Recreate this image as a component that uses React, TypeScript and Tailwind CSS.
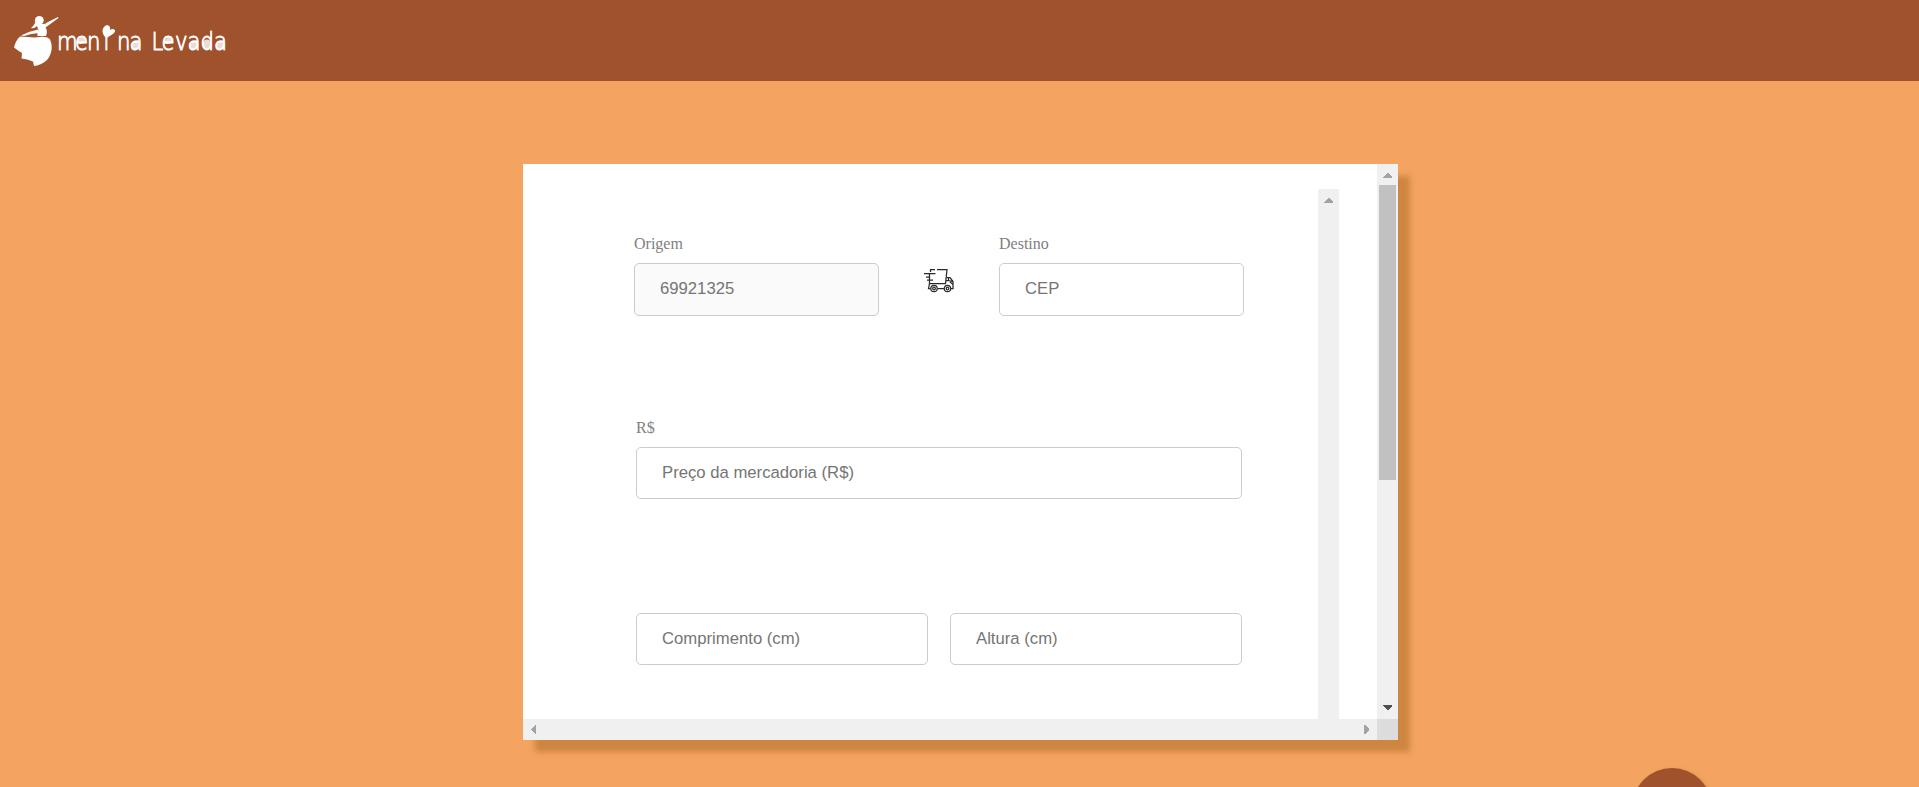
import type { ReactNode } from 'react';

type FieldProps = { label?: string; placeholder: string; className: string; disabled?: boolean };

function Field({ label, placeholder, className, disabled }: FieldProps) {
  return (
    <label className="flex min-w-0 flex-1 flex-col gap-[7px] font-['Liberation_Serif',serif] text-base leading-6 text-[#808080]">
      {label}
      <input
        placeholder={placeholder}
        disabled={disabled}
        className={`w-full rounded-[5px] border border-[#cccccc] bg-white px-[25px] font-['Liberation_Sans',sans-serif] text-[16.7px] placeholder:text-[#757575] disabled:bg-[#fafafa] ${className}`}
      />
    </label>
  );
}

function Logo() {
  return (
    <svg width="240" height="81" viewBox="0 0 240 81" fill="#fff">
      <path d="M20 36.500 C27 37 34 38 40 37 C44 36.500 48 37 50 39.500 C53 46 52 54 47 60 C43 64 38 65.500 34 66 L33 61.500 Q27 59 21.500 58.500 L22 53 Q17 50 14 47.500 C15 43 17 39 20 36.500Z" />
      <circle cx="39.300" cy="20.300" r="4.400" />
      <path d="M35.500 19 Q36 24 31 28 Q34 29 37 26 L38.500 30.500 Q37 34 37.500 36 L46 36 Q48 31 45.500 27.500 L58.500 18 L58 17 L47 22.500 Q45 24.500 42 24Z" />
      <path d="M38 29.500 Q30 31 21 35.500 L24 36 Q31 33.500 39 33Z" />
      <text
        transform="scale(.85 1)"
        x="67.1 88.2 102.4 121.8 137.6 152.4 168 178.2 190 205.9 220.6 235.9 251.8"
        y="50"
        fontSize="25"
        fontWeight="200"
        fontFamily="'DejaVu Sans', sans-serif"
        stroke="#fff"
        strokeWidth=".9"
        strokeLinejoin="round"
      >
        menina Levada
      </text>
      <path d="M106.500 38.500 C102 34 101.500 30 104 27 C107 23.500 111 26 110 30 C113 27.500 116 30 115 31.500 C113 35 109 35.500 106.500 38.500Z" />
      <g opacity=".8">
        <ellipse cx="82" cy="40.500" rx="4.500" ry="3" transform="rotate(-25 82 40.500)" />
        <ellipse cx="136" cy="45" rx="4.500" ry="4.500" />
        <ellipse cx="169" cy="40.500" rx="4.500" ry="3" transform="rotate(-25 169 40.500)" />
        <ellipse cx="194" cy="45" rx="4.500" ry="4.500" />
        <ellipse cx="207" cy="44.500" rx="4.500" ry="5" />
        <ellipse cx="220.500" cy="45" rx="4.500" ry="4.500" />
      </g>
    </svg>
  );
}

function Truck() {
  return (
    <svg width="30" height="24" viewBox="0 0 30 24" fill="none" stroke="#2b2b2b" strokeWidth="1.250">
      <path d="M6.500 3V.7H11M13 .7H23L21.500 14.500H5.500V5M0 4.500H11.500M2 8H5M3 11H9" />
      <path d="M5.500 14.500L4.500 19.500H6.500M13.500 19.500H20M27 19.500H29V12.500L26 8.500H22.500M24.500 8.500V11.500L28.500 12.500M22 11.500H24.500M28.500 15L26 13" />
      <circle cx="10" cy="19.500" r="3.200" /><circle cx="10" cy="19.500" r="1.300" />
      <circle cx="23.500" cy="19.500" r="3.200" /><circle cx="23.500" cy="19.500" r="1.300" />
    </svg>
  );
}

function Arrow({ d, color = '#a3a3a3' }: { d: string; color?: string }): ReactNode {
  return (
    <svg width="21" height="21" viewBox="0 0 21 21" className="shrink-0" shapeRendering="crispEdges">
      <path d={d} fill={color} />
    </svg>
  );
}

export default function App() {
  return (
    <div className="relative flex h-screen flex-col overflow-hidden bg-[#f4a460]">
      <header className="h-[81px] shrink-0 bg-[#a0522d]">
        <Logo />
      </header>
      <main className="flex justify-center pt-[83px] pl-0.5">
        <section className="flex h-[576px] w-[875px] shrink-0 flex-col bg-white shadow-[12px_12px_6px_#cd853f]">
          <div className="flex min-h-0 flex-1">
            <form className="w-[795px] pt-[68px] pr-[74px] pl-[111px]">
              <div className="flex">
                <Field label="Origem" placeholder="69921325" disabled className="h-[53px] pb-0.5" />
                <div className="w-[120px] shrink-0 pt-[37px] pl-[45px]">
                  <Truck />
                </div>
                <Field label="Destino" placeholder="CEP" className="h-[53px] pb-0.5" />
              </div>
              <div className="flex px-0.5 pt-[100px]">
                <Field label="R$" placeholder="Preço da mercadoria (R$)" className="h-[52px]" />
              </div>
              <div className="flex gap-[22px] px-0.5 pt-[114px]">
                <Field placeholder="Comprimento (cm)" className="h-[52px]" />
                <Field placeholder="Altura (cm)" className="h-[52px]" />
              </div>
            </form>
            <div className="mt-[25px] w-[21px] bg-[#f0f0f0]">
              <Arrow d="M6 14V13L10 9H11L15 13V14Z" />
            </div>
            <div className="ml-[38px] flex w-[21px] flex-col bg-[#f0f0f0]">
              <Arrow d="M6 14V13L10 9H11L15 13V14Z" />
              <div className="mx-0.5 h-[295px] bg-[#c1c1c1]" />
              <div className="mt-auto">
                <Arrow d="M6 7V8L10 12H11L15 8V7Z" color="#505050" />
              </div>
            </div>
          </div>
          <div className="flex h-[21px] bg-[#f0f0f0]">
            <Arrow d="M13 6H12L8 10V11L12 15H13Z" />
            <div className="flex-1" />
            <Arrow d="M8 6H9L13 10V11L9 15H8Z" />
            <div className="w-[21px] bg-[#dcdcdc]" />
          </div>
        </section>
      </main>
      <button aria-label="Menu" className="absolute top-[768px] left-[1632px] size-20 rounded-full bg-[#a0522d] shadow-[2px_2px_5px_#d9914f]" />
    </div>
  );
}
